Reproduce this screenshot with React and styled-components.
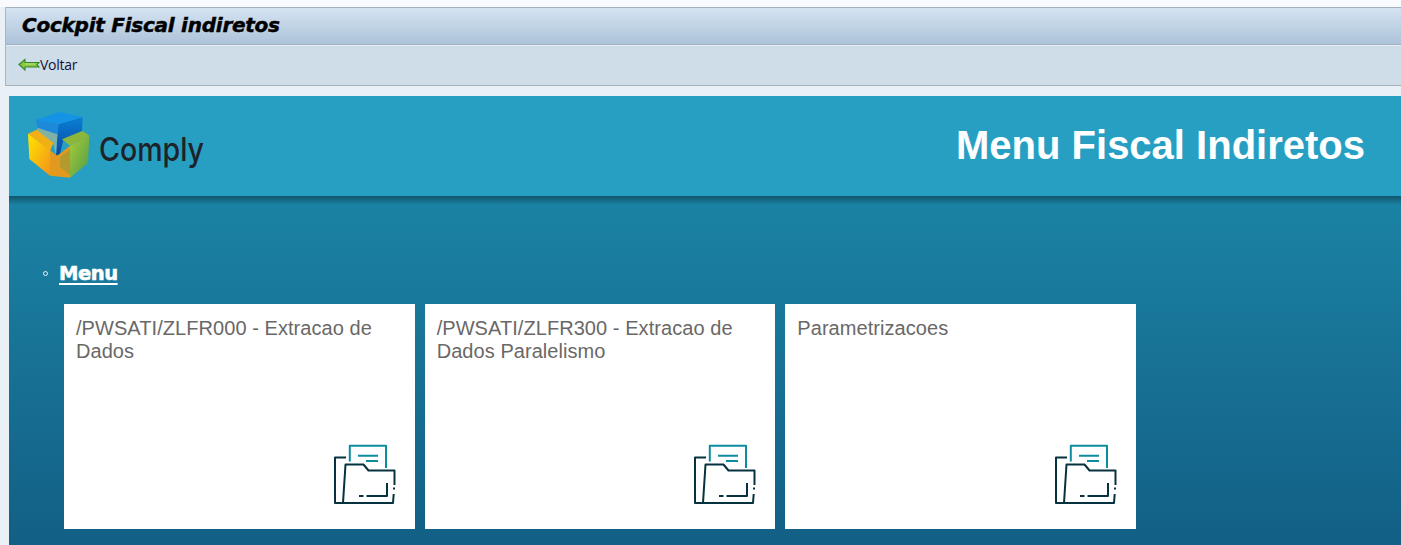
import React from "react";
import styled, { createGlobalStyle } from "styled-components";

const Global = createGlobalStyle`
  html, body { margin: 0; padding: 0; background: #e9f0f6; overflow: hidden; }
  body { width: 1401px; height: 545px; font-family: "Liberation Sans", Arial, sans-serif; }
`;

const Page = styled.div`
  width: 1401px;
  height: 545px;
  display: flex;
  flex-direction: column;
  overflow: hidden;
`;

const TopStrip = styled.div`
  height: 7px;
  background: #f8fafd;
  flex: none;
`;

const Chrome = styled.div`
  margin-left: 5px;
  flex: none;
  border-left: 1px solid #a9b5c6;
`;

const TitleBar = styled.div`
  height: 34px;
  border-top: 1px solid #a4afc0;
  border-bottom: 1px solid #a4afc0;
  background: linear-gradient(#d5e3f1, #adc3da);
  display: flex;
  align-items: center;
  padding: 0 0 2px 16px;
`;

const Title = styled.h1`
  margin: 0;
  font: italic bold 20px "DejaVu Sans", Verdana, sans-serif;
  letter-spacing: -0.25px;
  -webkit-text-stroke: 0.45px #000;
  color: #000;
`;

const Toolbar = styled.div`
  height: 37px;
  border-top: 1px solid #e6edf4;
  border-bottom: 1px solid #a4afc0;
  background: #cfdde8;
  display: flex;
  align-items: center;
  padding: 0 0 2px 12px;
`;

const BackButton = styled.button`
  border: 0;
  background: none;
  padding: 0;
  display: flex;
  align-items: center;
  color: #14123a;
  font: 14px "Open Sans", Tahoma, sans-serif;
  letter-spacing: -0.25px;
`;

const Content = styled.main`
  margin: 10px 0 0 9px;
  flex: 1;
  display: flex;
  flex-direction: column;
  min-height: 0;
`;

const Banner = styled.header`
  flex: none;
  height: 100px;
  box-sizing: border-box;
  background: #279fc2;
  display: flex;
  align-items: center;
  justify-content: space-between;
  padding: 0 36px 2px 19px;
`;

const Logo = styled.div`
  display: flex;
  align-items: center;
  gap: 9px;
`;

const LogoWord = styled.span`
  font: 500 33px "Inter", "Noto Sans", sans-serif;
  color: #1e2229;
  transform: scaleX(0.865);
  transform-origin: left center;
  width: 108px;
  margin-top: 7px;
`;

const BannerTitle = styled.h2`
  margin: 0;
  color: #fff;
  font: bold 40px "Liberation Sans", Arial, sans-serif;
`;

const Body = styled.section`
  flex: 1;
  background:
    linear-gradient(rgba(12, 60, 80, 0.65), rgba(12, 60, 80, 0) 9px),
    linear-gradient(#1b83a4, #135f85);
  padding: 66px 0 0 55px;
`;

const SectionLabel = styled.div`
  position: relative;
  height: 24px;
  margin-bottom: 18px;
  line-height: 24px;

  &::before {
    content: "";
    position: absolute;
    left: -21px;
    top: 9px;
    width: 3px;
    height: 3px;
    border: 1px solid #e8f2f6;
    border-radius: 50%;
  }
`;

const MenuLink = styled.a`
  color: #fff;
  font: bold 19.5px "DejaVu Sans", "Liberation Sans", sans-serif;
  letter-spacing: -0.45px;
  text-decoration: underline;
  text-underline-offset: 3px;
  text-decoration-thickness: 2px;
  -webkit-text-stroke: 0.6px #fff;
  margin-left: -5px;
`;

const CardRow = styled.div`
  display: grid;
  grid-template-columns: repeat(3, 350.67px);
  column-gap: 10px;
`;

const Card = styled.article`
  height: 225px;
  background: #fff;
  padding: 13px 19px 25px 12px;
  box-sizing: border-box;
  display: flex;
  flex-direction: column;
  justify-content: space-between;
  color: #6a6867;
  font-size: 20px;
  letter-spacing: 0.06px;
  line-height: 23px;
`;

const CardTitle = styled.div``;

const CardIcon = styled.div`
  align-self: flex-end;
  height: 60px;
  width: 62px;
`;

const ArrowIcon = () => (
  <svg width="22" height="16" viewBox="0 0 22 16">
    <path d="M1 7.5 L7 2.5 V5.5 H21 L19 7.7 L21 10 H7 V13 Z" fill="#8cc63f" stroke="#2c8a2c" strokeWidth="1.1" />
    <path d="M7 7 H17" stroke="#b9df7a" strokeWidth="1.2" />
  </svg>
);

const FolderIcon = () => (
  <svg width="62" height="60" viewBox="334 444 62 60" fill="none" strokeWidth="2" strokeLinejoin="round">
    <g stroke="#0e8c9f">
      <path d="M349.8 461.5 V445.8 H386 V468" />
      <path d="M358 455.7 H378 M366 461 H378" />
    </g>
    <g stroke="#06323f">
      <path d="M346 457.5 H335 V503 H393 L393.7 494" />
      <path d="M343 503 L345.5 464.5 H363.5 L368.5 470.5 H394.5 V485" />
      <path d="M395 488.5 H393" />
      <path d="M387 483 V496 H366.5 M363.5 496 H359" />
    </g>
  </svg>
);

const CubeLogo = () => (
  <svg width="62" height="66" viewBox="24 15 186 198">
    <defs>
      <linearGradient id="blueFace" x1="0" y1="0" x2="0" y2="1">
        <stop offset="0" stopColor="#0a7fd6" />
        <stop offset="1" stopColor="#0b47a0" />
      </linearGradient>
      <linearGradient id="yellowFace" x1="0" y1="0" x2="1" y2="1">
        <stop offset="0" stopColor="#ffe600" />
        <stop offset="1" stopColor="#f3921a" />
      </linearGradient>
      <linearGradient id="greenFace" x1="0" y1="0" x2="1" y2="1">
        <stop offset="0" stopColor="#a9cc38" />
        <stop offset="1" stopColor="#4e9b4a" />
      </linearGradient>
    </defs>
    <path d="M115 52 L188 30 L186 75 L130 100 L120 140 L108 146 Z" fill="url(#blueFace)" />
    <path d="M48 38 L120 15 L188 30 L115 52 Z" fill="#1593e4" />
    <path d="M48 38 L115 52 L112 85 L52 64 Z" fill="#1c8ad8" />
    <path d="M52 62 L112 82 L108 145 L100 110 L52 75 Z" fill="#7fb1a6" />
    <path d="M24 80 L50 68 L100 108 L90 132 Z" fill="#f0b015" />
    <path d="M24 80 L90 130 L90 206 L28 156 Z" fill="url(#yellowFace)" />
    <path d="M90 130 L112 146 L150 116 L150 212 L90 206 Z" fill="#e29a1e" />
    <path d="M150 116 L208 85 L204 168 L150 212 Z" fill="url(#greenFace)" />
    <path d="M126 97 L186 72 L208 85 L150 116 Z" fill="#8db63c" />
    <path d="M120 150 L150 128 L150 205 L120 180 Z" fill="#a99a32" opacity="0.8" />
  </svg>
);

const cards = [
  "/PWSATI/ZLFR000 - Extracao de Dados",
  "/PWSATI/ZLFR300 - Extracao de Dados Paralelismo",
  "Parametrizacoes",
];

export default function App() {
  return (
    <Page>
      <Global />
      <TopStrip />
      <Chrome>
        <TitleBar>
          <Title>Cockpit Fiscal indiretos</Title>
        </TitleBar>
        <Toolbar>
          <BackButton>
            <ArrowIcon />
            Voltar
          </BackButton>
        </Toolbar>
      </Chrome>
      <Content>
        <Banner>
          <Logo>
            <CubeLogo />
            <LogoWord>Comply</LogoWord>
          </Logo>
          <BannerTitle>Menu Fiscal Indiretos</BannerTitle>
        </Banner>
        <Body>
          <SectionLabel>
            <MenuLink>Menu</MenuLink>
          </SectionLabel>
          <CardRow>
            {cards.map((c) => (
              <Card key={c}>
                <CardTitle>{c}</CardTitle>
                <CardIcon>
                  <FolderIcon />
                </CardIcon>
              </Card>
            ))}
          </CardRow>
        </Body>
      </Content>
    </Page>
  );
}
